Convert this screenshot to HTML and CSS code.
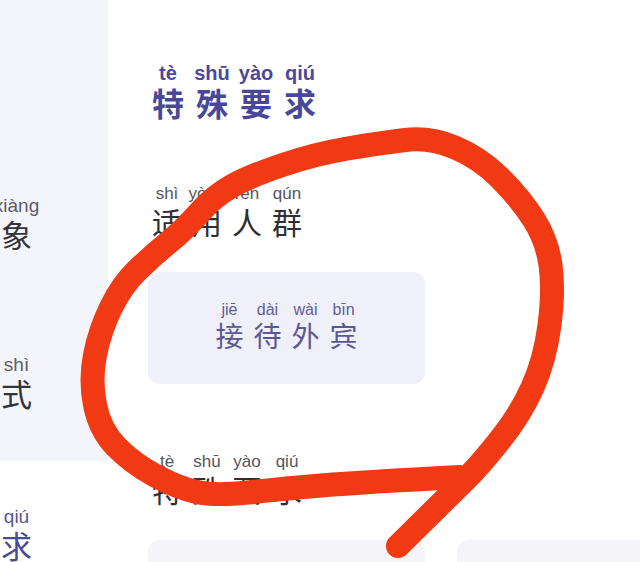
FILE: index.html
```html
<!DOCTYPE html>
<html lang="zh-CN">
<head>
<meta charset="utf-8">
<title>特殊要求</title>
<link rel="stylesheet" href="styles.css">
</head>
<body>
<div class="app">
  <aside class="side">
    <div class="side-panel">
      <div class="word side-item">
        <span class="ru"><span class="py">duì</span><span class="hz">对</span></span>
        <span class="ru"><span class="py">xiàng</span><span class="hz">象</span></span>
      </div>
      <div class="word side-item side-item-2">
        <span class="ru"><span class="py">fāng</span><span class="hz">方</span></span>
        <span class="ru"><span class="py">shì</span><span class="hz">式</span></span>
      </div>
    </div>
    <div class="word side-item side-item-active">
      <span class="ru"><span class="py">yào</span><span class="hz">要</span></span>
      <span class="ru"><span class="py">qiú</span><span class="hz">求</span></span>
    </div>
  </aside>

  <main class="main">
    <h1 class="word title">
      <span class="ru"><span class="py">tè</span><span class="hz">特</span></span>
      <span class="ru"><span class="py">shū</span><span class="hz">殊</span></span>
      <span class="ru"><span class="py">yào</span><span class="hz">要</span></span>
      <span class="ru"><span class="py">qiú</span><span class="hz">求</span></span>
    </h1>

    <div class="word label">
      <span class="ru"><span class="py">shì</span><span class="hz">适</span></span>
      <span class="ru"><span class="py">yòng</span><span class="hz">用</span></span>
      <span class="ru"><span class="py">rén</span><span class="hz">人</span></span>
      <span class="ru"><span class="py">qún</span><span class="hz">群</span></span>
    </div>
    <div class="cards">
      <div class="card">
        <div class="word card-word">
          <span class="ru"><span class="py">jiē</span><span class="hz">接</span></span>
          <span class="ru"><span class="py">dài</span><span class="hz">待</span></span>
          <span class="ru"><span class="py">wài</span><span class="hz">外</span></span>
          <span class="ru"><span class="py">bīn</span><span class="hz">宾</span></span>
        </div>
      </div>
    </div>

    <div class="word label label-next">
      <span class="ru"><span class="py">tè</span><span class="hz">特</span></span>
      <span class="ru"><span class="py">shū</span><span class="hz">殊</span></span>
      <span class="ru"><span class="py">yào</span><span class="hz">要</span></span>
      <span class="ru"><span class="py">qiú</span><span class="hz">求</span></span>
    </div>
    <div class="cards">
      <div class="card card-plain"></div>
      <div class="card card-plain"></div>
    </div>
  </main>
</div>

<svg class="scribble" width="640" height="562" viewBox="0 0 640 562" aria-hidden="true">
  <path d="M 460 477
           Q 363 482 321.5 485.5
           Q 280 489 247.5 492.5
           Q 215 496 196.5 492
           Q 178 488 155 475.5
           Q 132 463 116 446.5
           Q 100 430 95 405
           Q 90 380 95 355
           Q 100 330 111 307.5
           Q 122 285 137 270.5
           Q 152 256 168.5 242.5
           Q 185 229 199.5 212.5
           Q 214 196 232 186
           Q 250 176 282.5 165
           Q 315 154 347.5 148.5
           Q 380 143 405 140
           Q 430 137 455 147.5
           Q 480 158 500 178
           Q 520 198 533.5 219
           Q 547 240 550.5 265
           Q 554 290 549.5 325
           Q 545 360 532.5 387.5
           Q 520 415 500 440
           Q 480 465 467.5 477.5
           Q 455 490 398 546"
        fill="none" stroke="#f13a14" stroke-width="24" stroke-linecap="round" stroke-linejoin="round"/>
</svg>
</body>
</html>
```

FILE: styles.css
```css
* {
  box-sizing: border-box;
}

html, body {
  margin: 0;
  padding: 0;
  background: #ffffff;
}

body {
  width: 640px;
  height: 562px;
  overflow: hidden;
  position: relative;
  font-family: "Liberation Sans", "Noto Sans CJK SC", sans-serif;
}

.app {
  display: flex;
  width: 640px;
  height: 562px;
  overflow: hidden;
}

/* ruby-like word: pinyin over hanzi */
.word {
  display: flex;
  margin: 0;
}

.ru {
  display: flex;
  flex-direction: column;
  align-items: center;
}

.py {
  white-space: nowrap;
  font-family: "Liberation Sans", Arial, sans-serif;
}

.hz {
  font-family: "Noto Sans CJK SC", "Noto Sans CJK TC", sans-serif;
  white-space: nowrap;
}

/* side column */
.side {
  width: 108px;
  flex: none;
  display: flex;
  flex-direction: column;
}

.side-panel {
  height: 462px;
  background: #f4f5fa;
  padding-top: 195px;
}

.side-item {
  width: 100px;
  margin-left: -54px;
  justify-content: center;
  gap: 10px;
}

.side-item .ru {
  width: 31px;
}

.side-item .py {
  font-size: 19px;
  line-height: 22px;
  color: #5c5c66;
}

.side-item .hz {
  font-size: 31px;
  line-height: 34px;
  color: #33333a;
}

.side-item-2 {
  margin-top: 103px;
}

.side-item-active {
  margin-top: 45px;
}

.side-item-active .py {
  color: #57559a;
}

.side-item-active .hz {
  color: #4a4898;
}

/* main column */
.main {
  flex: 1;
  min-width: 0;
  padding: 62px 0 0 40px;
}

.title {
  padding-left: 4px;
  gap: 12px;
  font-weight: normal;
}

.title .ru {
  width: 32px;
}

.title .py {
  font-size: 20px;
  line-height: 22px;
  font-weight: bold;
  color: #4a499c;
}

.title .hz {
  font-size: 32px;
  line-height: 36px;
  font-weight: bold;
  color: #48479a;
}

.label {
  margin-top: 64px;
  padding-left: 4px;
  gap: 10px;
}

.label .ru {
  width: 30px;
}

.label .py {
  font-size: 17px;
  line-height: 20px;
  color: #55555c;
}

.label .hz {
  font-size: 30px;
  line-height: 34px;
  color: #2f2f35;
}

.label-next {
  margin-top: 68px;
}

.cards {
  display: grid;
  grid-template-columns: 277px 277px;
  gap: 32px;
  margin-top: 34px;
}

.card {
  height: 112px;
  border-radius: 12px;
  background: #f0f0fb;
  display: flex;
  align-items: center;
  justify-content: center;
  padding-bottom: 4px;
}

.card-plain {
  background: #f5f5f9;
}

.card-word {
  gap: 10px;
}

.card-word .ru {
  width: 28px;
}

.card-word .py {
  font-size: 16px;
  line-height: 18px;
  color: #5f5d96;
}

.card-word .hz {
  font-size: 28px;
  line-height: 32px;
  color: #5a5893;
}

/* hand-drawn annotation over the screenshot */
.scribble {
  position: absolute;
  left: 0;
  top: 0;
  pointer-events: none;
}
```
